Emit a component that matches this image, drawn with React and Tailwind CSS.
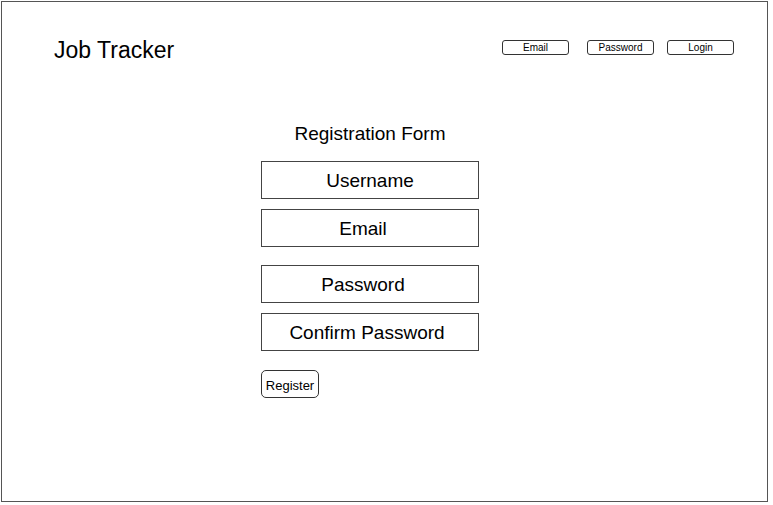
export default function App() {
  return (
    <div className="w-[773px] h-[505px] bg-white pl-px pt-px" style={{ fontFamily: '"Liberation Sans", Arial, sans-serif' }}>
      <div className="w-[767px] h-[501px] border-[1.5px] border-[#555] text-black">
        {/* Header */}
        <div className="flex items-start justify-between pl-[52px] pr-[31px] pt-[34px]">
          <h1 className="text-[23px] leading-[28px]">Job Tracker</h1>
          <div className="flex items-center mt-[4px] mr-[2px]">
            <NavButton label="Email" />
            <NavButton label="Password" className="ml-[18px]" />
            <NavButton label="Login" className="ml-[13px]" />
          </div>
        </div>

        {/* Registration form */}
        <div className="ml-[259px] mt-[59px] w-[218px] flex flex-col">
          <h2 className="text-center text-[19px] leading-[22px] mb-[16px]">Registration Form</h2>
          <Field label="Username" />
          <Field label="Email" className="mt-[10px] pr-[14px]" />
          <Field label="Password" className="mt-[18px] pr-[14px]" />
          <Field label="Confirm Password" className="mt-[10px] pr-[6px]" />
          <button className="mt-[19px] w-[58px] h-[28px] pt-[2px] border border-[#333] rounded-[5px] text-[13px] leading-none bg-white">
            Register
          </button>
        </div>
      </div>
    </div>
  );
}

function NavButton({ label, className = "" }) {
  return (
    <button className={`w-[67px] h-[15px] border border-[#333] rounded-[3px] text-[10px] leading-none bg-white ${className}`}>
      {label}
    </button>
  );
}

function Field({ label, className = "" }) {
  return (
    <div className={`h-[38px] pt-[2px] border border-[#444] flex items-center justify-center text-[19px] ${className}`}>
      {label}
    </div>
  );
}
